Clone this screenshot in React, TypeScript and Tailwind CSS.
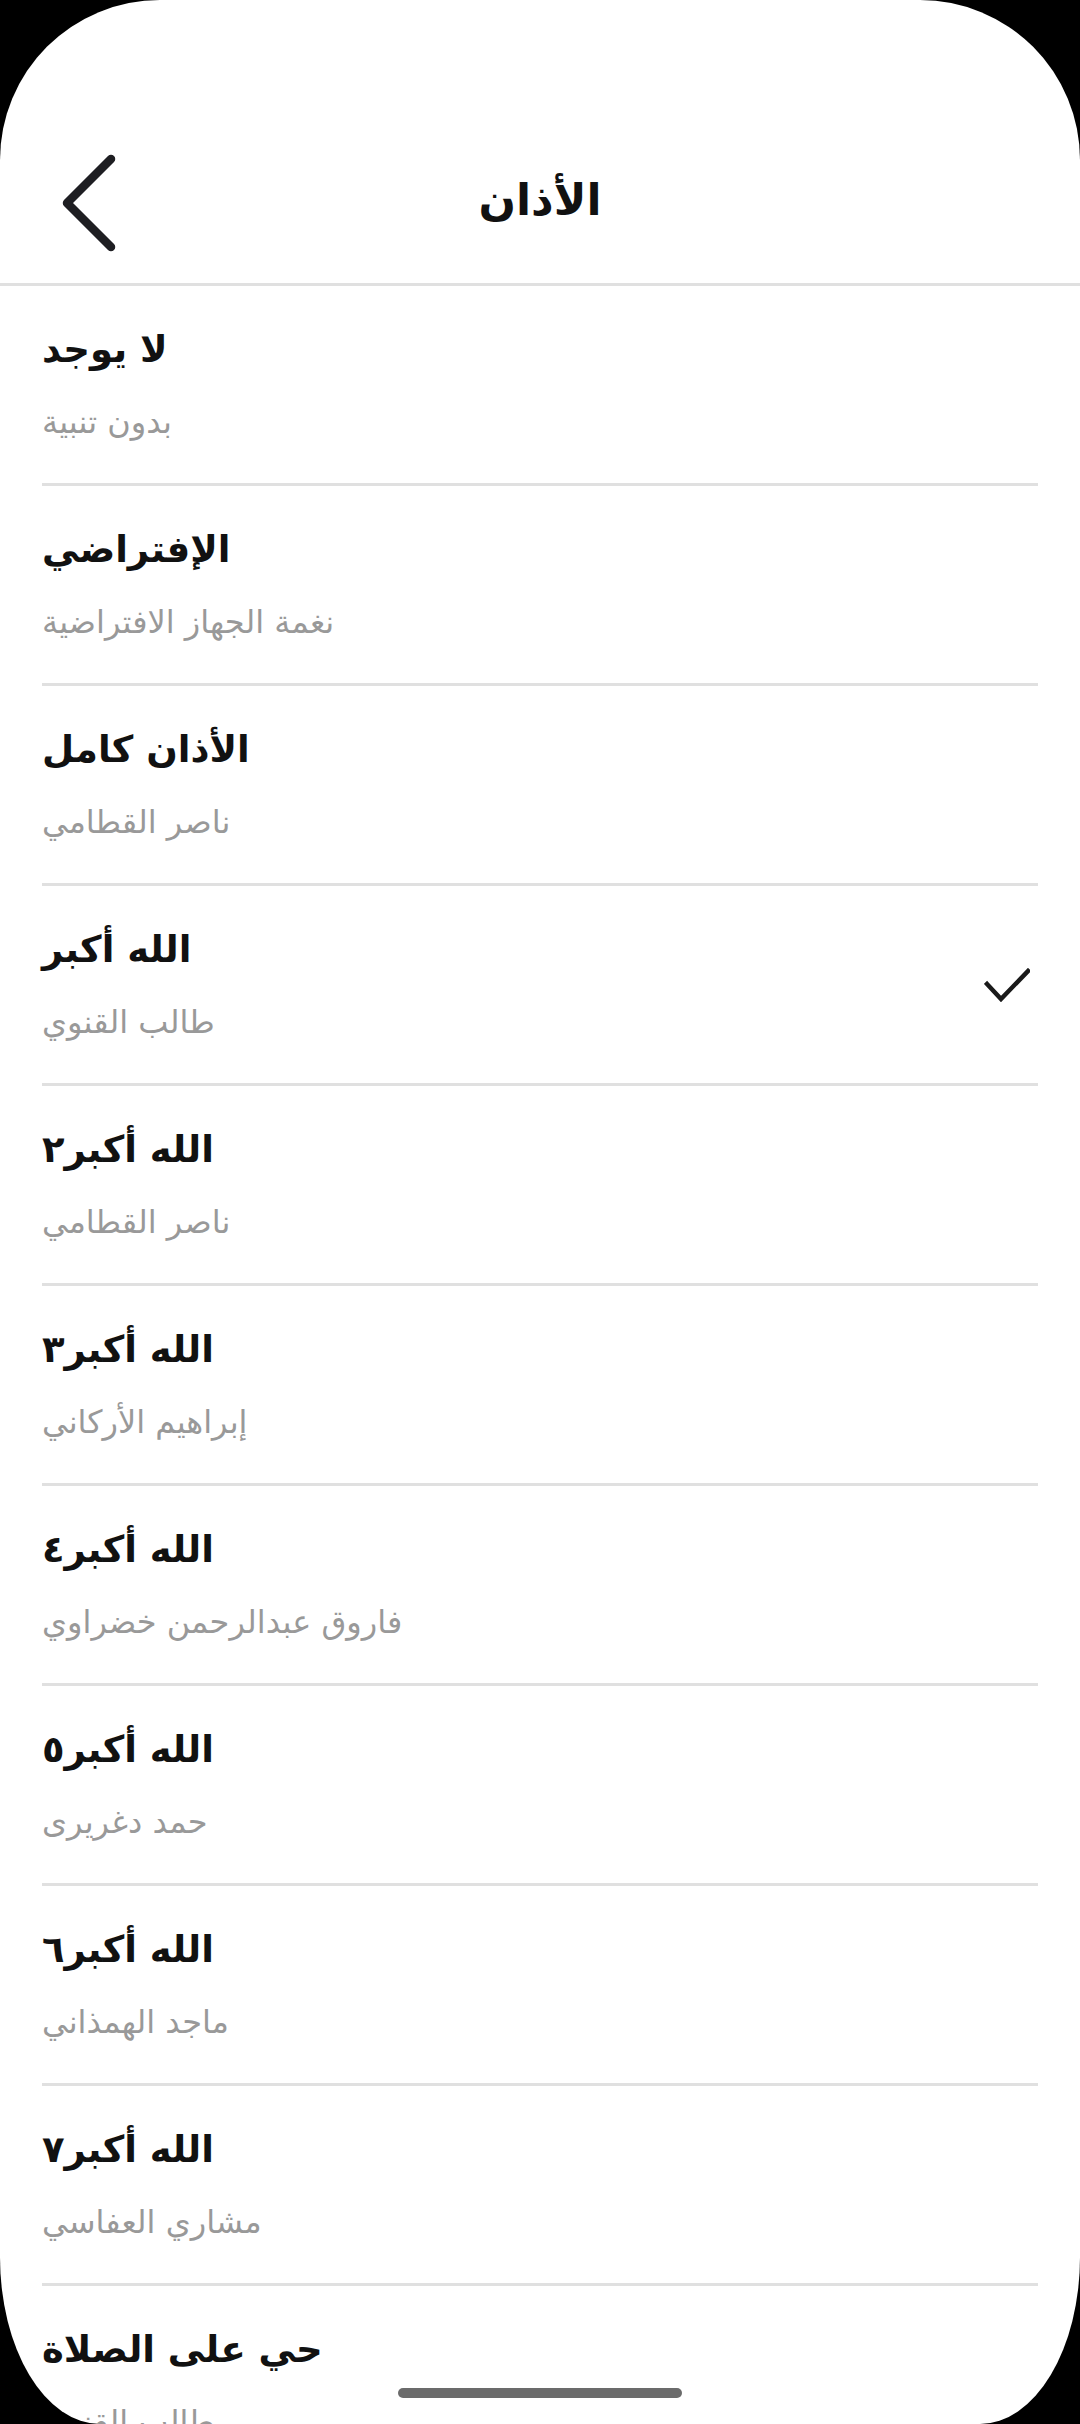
const sounds = [
  { title: "لا يوجد", sub: "بدون تنبية" },
  { title: "الإفتراضي", sub: "نغمة الجهاز الافتراضية" },
  { title: "الأذان كامل", sub: "ناصر القطامي" },
  { title: "الله أكبر", sub: "طالب القنوي", selected: true },
  { title: "الله أكبر٢", sub: "ناصر القطامي" },
  { title: "الله أكبر٣", sub: "إبراهيم الأركاني" },
  { title: "الله أكبر٤", sub: "فاروق عبدالرحمن خضراوي" },
  { title: "الله أكبر٥", sub: "حمد دغريرى" },
  { title: "الله أكبر٦", sub: "ماجد الهمذاني" },
  { title: "الله أكبر٧", sub: "مشاري العفاسي" },
  { title: "حي على الصلاة", sub: "طالب القنوي" },
];

export default function App() {
  return (
    <div className="h-[2424px] w-[1080px] overflow-hidden bg-black font-['DejaVu_Sans',sans-serif]">
      <div className="relative flex h-full flex-col overflow-hidden rounded-t-[160px] rounded-b-[100px_167px] bg-white">
        {/* header */}
        <header className="grid h-[283px] shrink-0 grid-cols-[1fr_auto_1fr] items-center pt-[122px]">
          <div className="pl-[56px]">
            <svg width="66" height="102" viewBox="0 0 66 102" fill="none">
              <polyline
                points="55,7 11,51 55,95"
                stroke="#1e1e22"
                strokeWidth="8.5"
                strokeLinecap="round"
                strokeLinejoin="round"
              />
            </svg>
          </div>
          <h1 dir="rtl" className="mb-[6px] text-[44px] font-bold leading-none text-[#111]">
            الأذان
          </h1>
          <div />
        </header>
        <div className="h-[3px] shrink-0 bg-[#e0e0e0]" />

        {/* sound list */}
        <ul className="flex flex-col">
          {sounds.map((s) => (
            <li
              key={s.title}
              className="mx-[42px] flex h-[200px] shrink-0 items-center justify-between border-b-[3px] border-[#e0e0e0]"
            >
              <div className="flex flex-col items-start self-start pt-[40px]">
                <p dir="rtl" className="text-[37px] font-bold leading-[48px] text-[#111]">
                  {s.title}
                </p>
                <p dir="rtl" className="mt-[28px] text-[32px] leading-[40px] text-[#999]">
                  {s.sub}
                </p>
              </div>
              {s.selected && (
                <svg className="mr-[8px]" width="46" height="34" viewBox="0 0 46 34" fill="none">
                  <polyline
                    points="3,16 17,31 44,3"
                    stroke="#1a1a1a"
                    strokeWidth="4.5"
                    strokeLinecap="square"
                  />
                </svg>
              )}
            </li>
          ))}
        </ul>

        <div className="absolute bottom-[26px] left-1/2 h-[10px] w-[284px] -translate-x-1/2 rounded-full bg-[#6b6b6b]" />
      </div>
    </div>
  );
}
